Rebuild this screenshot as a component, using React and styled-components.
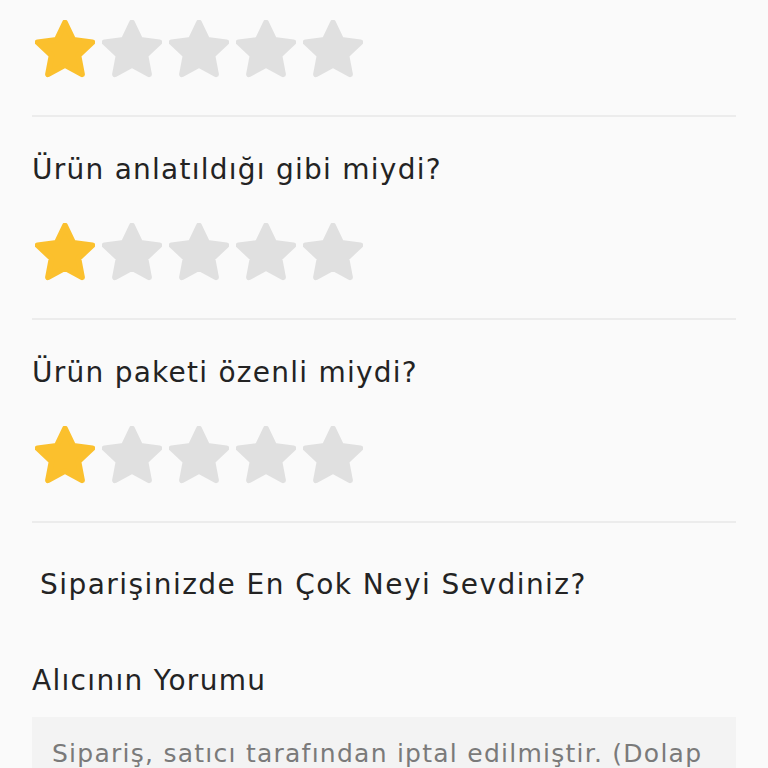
import React from "react";
import styled, { createGlobalStyle } from "styled-components";

const Global = createGlobalStyle`
  html, body { margin: 0; padding: 0; background: #fafafa; }
  body { font-family: "DejaVu Sans", "Noto Sans", sans-serif; color: #232323; overflow: hidden; }
`;

const Page = styled.div`
  padding: 20px 32px 0 32px;
  display: flex;
  flex-direction: column;
`;

const Section = styled.section`
  display: flex;
  flex-direction: column;
  border-bottom: 2px solid #ececec;
  padding-bottom: 35px;
`;

const Question = styled.h3`
  margin: 37px 0 37px 0;
  font-size: 28px;
  line-height: 32px;
  font-weight: 400;
  letter-spacing: 1.25px;
  color: #232323;
`;

const Stars = styled.div`
  display: flex;
  gap: 7px;
  padding-left: 3px;
`;

const StarSvg = styled.svg`
  width: 60px;
  height: 60px;
  display: block;
`;

const Title = styled.h2`
  margin: 46px 0 0 8px;
  font-size: 28px;
  line-height: 32px;
  font-weight: 400;
  letter-spacing: 1.45px;
  color: #232323;
`;

const SubTitle = styled.h3`
  margin: 64px 0 0 0;
  font-size: 28px;
  line-height: 32px;
  font-weight: 400;
  letter-spacing: 1.3px;
  color: #232323;
`;

const CommentBox = styled.div`
  margin-top: 20px;
  background: #f3f3f3;
  padding: 20px 20px;
  font-size: 25px;
  line-height: 34px;
  color: #7a7a7a;
  letter-spacing: 1.25px;
  white-space: nowrap;
  overflow: hidden;
`;

const Star = ({ filled }) => (
  <StarSvg viewBox="2.5 2.4 19 19">
    <path
      d="M12 3.2l2.65 5.5 6.05.75-4.45 4.15 1.15 6-5.4-2.95-5.4 2.95 1.15-6L3.3 9.45l6.05-.75z"
      fill={filled ? "#fbc02d" : "#e0e0e0"}
      stroke={filled ? "#fbc02d" : "#e0e0e0"}
      strokeWidth="1.8"
      strokeLinejoin="round"
    />
  </StarSvg>
);

const Rating = ({ value }) => (
  <Stars>
    {[1, 2, 3, 4, 5].map((i) => (
      <Star key={i} filled={i <= value} />
    ))}
  </Stars>
);

export default function App() {
  return (
    <>
      <Global />
      <Page>
        <Section>
          <Rating value={1} />
        </Section>
        <Section>
          <Question>Ürün anlatıldığı gibi miydi?</Question>
          <Rating value={1} />
        </Section>
        <Section>
          <Question>Ürün paketi özenli miydi?</Question>
          <Rating value={1} />
        </Section>
        <Title>Siparişinizde En Çok Neyi Sevdiniz?</Title>
        <SubTitle>Alıcının Yorumu</SubTitle>
        <CommentBox>Sipariş, satıcı tarafından iptal edilmiştir. (Dolap</CommentBox>
      </Page>
    </>
  );
}
